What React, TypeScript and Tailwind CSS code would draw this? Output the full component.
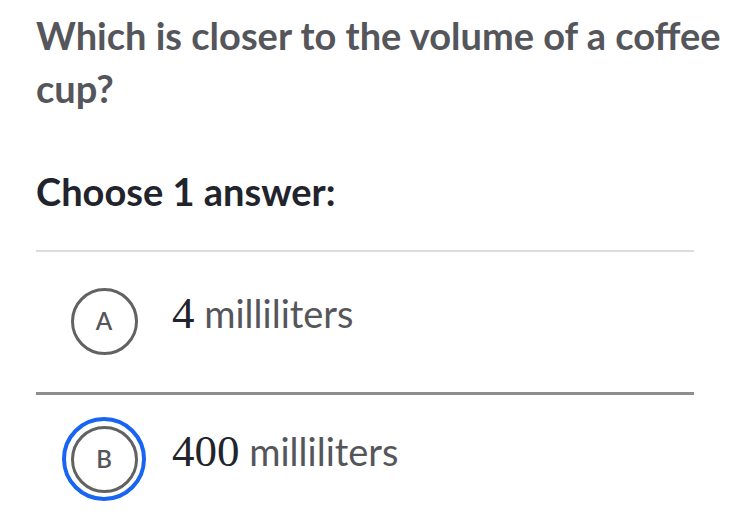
const options = [
  { letter: "A", num: "4", unit: "milliliters", focused: false },
  { letter: "B", num: "400", unit: "milliliters", focused: true },
];

export default function App() {
  return (
    <div className="min-h-[522px] bg-white px-[36px] pt-[9px]" style={{ fontFamily: "Lato, 'Noto Sans', sans-serif" }}>
      <h1 className="w-[700px] text-[38px] font-bold leading-[53px] text-[#55565b]">
        Which is closer to the volume of a coffee cup?
      </h1>
      <h2 className="mt-[50px] text-[38px] font-bold leading-[53px] text-[#21242c]">Choose 1 answer:</h2>
      <ul className="mt-[32px] w-[658px] border-t-2 border-[#dcdcdc]">
        {options.map((o, i) => (
          <li
            key={o.letter}
            className={`flex items-center gap-[26px] pl-[26px] ${
              i === 0 ? "border-b-[3px] border-[#8e8e8e] pt-[27px] pb-[29px]" : "pt-[22px] pb-[20px]"
            }`}
          >
            <div
              className={`flex h-[84px] w-[84px] shrink-0 items-center justify-center rounded-full ${
                o.focused ? "border-4 border-[#1865f2]" : ""
              }`}
            >
              <div className="flex h-[67px] w-[67px] shrink-0 items-center justify-center rounded-full border-[3px] border-[#626262] text-[24px] font-semibold text-[#55565b]">
                {o.letter}
              </div>
            </div>
            <div className="mb-[16px] whitespace-nowrap text-[38px] leading-[48px] text-[#55565b]">
              <span className="text-[45px] leading-[48px] text-[#21242c]" style={{ fontFamily: "'Liberation Serif', serif" }}>
                {o.num}
              </span>{" "}
              {o.unit}
            </div>
          </li>
        ))}
      </ul>
    </div>
  );
}
